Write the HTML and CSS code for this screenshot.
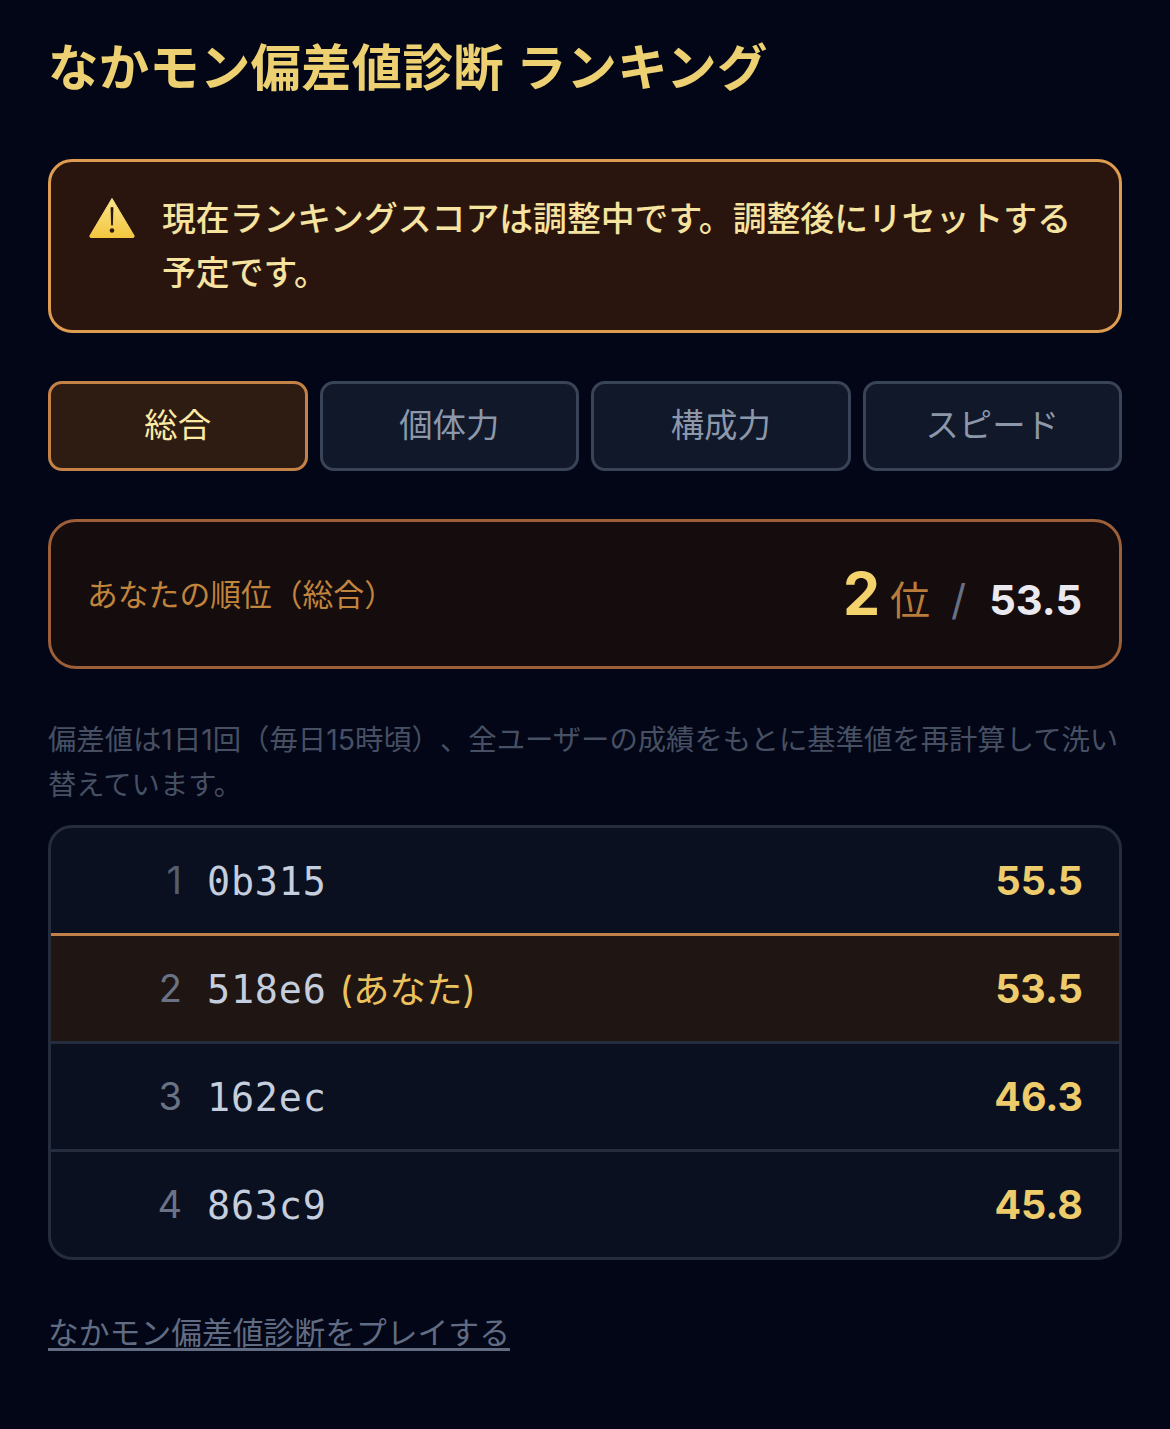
FILE: index.html
```html
<!DOCTYPE html>
<html lang="ja">
<head>
<meta charset="utf-8">
<title>なかモン偏差値診断 ランキング</title>
<link rel="stylesheet" href="styles.css">
</head>
<body>
<main class="page">
  <h1 class="title">なかモン偏差値診断 ランキング</h1>
  <section class="notice">
    <svg class="notice-icon" viewBox="0 0 46 41" aria-hidden="true">
      <defs>
        <linearGradient id="warn" x1="0" y1="0" x2="0" y2="1">
          <stop offset="0" stop-color="#fbe68c"/>
          <stop offset="1" stop-color="#f3c63f"/>
        </linearGradient>
      </defs>
      <path d="M23 1.5 L45 38.5 Q45.6 40.5 44 40.5 L2 40.5 Q.4 40.5 1 38.5 Z" fill="url(#warn)" stroke="url(#warn)" stroke-linejoin="round"/>
      <path d="M21.6 10.5 Q23 9.3 24.4 10.5 L23.9 28 Q23 29 22.1 28 Z" fill="#2a1a10"/>
      <circle cx="23" cy="33.5" r="2.3" fill="#2a1a10"/>
    </svg>
    <p class="notice-text">現在ランキングスコアは調整中です。調整後にリセットする予定です。</p>
  </section>
  <nav class="tabs">
    <a class="tab tab-active">総合</a>
    <a class="tab">個体力</a>
    <a class="tab">構成力</a>
    <a class="tab">スピード</a>
  </nav>
  <section class="mine">
    <span class="mine-label">あなたの順位（総合）</span>
    <span class="mine-value">
      <b class="mine-rank">2</b>
      <span class="mine-unit">位</span>
      <span class="mine-sep">/</span>
      <b class="mine-score">53.5</b>
    </span>
  </section>
  <p class="note">偏差値は1日1回（毎日15時頃）、全ユーザーの成績をもとに基準値を再計算して洗い替えています。</p>
  <ol class="board">
    <li class="row"><span class="pos pos-dim">1</span><span class="name">0b315</span><b class="score">55.5</b></li>
    <li class="row row-me"><span class="pos">2</span><span class="name">518e6<span class="you">(あなた)</span></span><b class="score">53.5</b></li>
    <li class="row"><span class="pos">3</span><span class="name">162ec</span><b class="score">46.3</b></li>
    <li class="row"><span class="pos">4</span><span class="name">863c9</span><b class="score">45.8</b></li>
  </ol>
  <a class="play" href="#">なかモン偏差値診断をプレイする</a>
</main>
</body>
</html>
```
FILE: styles.css
```css
* { box-sizing: border-box; }
html, body { margin: 0; padding: 0; }
body {
  background: #020617;
  font-family: Inter, "Noto Sans CJK JP", sans-serif;
  text-spacing-trim: space-all;
  color: #e2e8f0;
  height: 1429px;
  overflow: hidden;
}
.page { padding: 32px 48px 0; }
.title {
  margin: 0 0 55px;
  font-size: 50.4px;
  letter-spacing: .25px;
  line-height: 72px;
  font-weight: 700;
  color: #edd071;
}
.notice {
  display: flex;
  gap: 27px;
  padding: 30px 38px 30px;
  border: 3px solid #dd9c50;
  border-radius: 24px;
  background: #29150e;
  margin-bottom: 48px;
}
.notice-icon { flex: none; width: 46px; height: 41px; margin-top: 5px; }
.notice-text {
  margin: 0;
  font-size: 33.85px;
  line-height: 54px;
  font-weight: 500;
  color: #f6e3a0;
}
.tabs {
  display: grid;
  grid-template-columns: repeat(4, 1fr);
  gap: 12px;
  margin-bottom: 48px;
}
.tab {
  height: 90px;
  display: flex;
  align-items: center;
  justify-content: center;
  padding-bottom: 7px;
  font-size: 33.4px;
  color: #8c97aa;
  background: #10182a;
  border: 3px solid #3a4458;
  border-radius: 14px;
}
.tab-active {
  color: #fbe9a4;
  background: #2e1b12;
  border-color: #c58247;
}
.mine {
  height: 150px;
  display: flex;
  align-items: center;
  justify-content: space-between;
  padding: 0 37px 0 36px;
  border: 3px solid #9c5f38;
  border-radius: 28px;
  background: #150c0e;
  margin-bottom: 49px;
}
.mine-label { font-size: 30.8px; color: #c0843c; padding-bottom: 4px; }
.mine-value { display: flex; align-items: baseline; padding-top: 3px; }
.mine-rank { font-size: 59px; line-height: 1; font-weight: 700; color: #f5d36c; }
.mine-unit { font-size: 40px; color: #b97c3b; margin-left: 10px; }
.mine-sep { font-size: 42px; color: #667085; margin-left: 21px; }
.mine-score { font-size: 41.6px; font-weight: 700; color: #e9e9ef; margin-left: 23px; }
.note {
  margin: 0 0 17px;
  font-size: 28.35px;
  line-height: 45px;
  color: #475063;
}
.board {
  list-style: none;
  margin: 0 0 50px;
  padding: 0;
  border: 3px solid #242c3e;
  border-radius: 24px;
  overflow: hidden;
  background: #0a101f;
}
.row {
  height: 108px;
  display: flex;
  align-items: center;
  padding: 0 36px 0 0;
  border-bottom: 3px solid #242c3e;
}
.row:last-child { border-bottom: 0; height: 105px; }
.row:first-child { border-bottom-color: #c0814a; }
.row-me { background: #1f1512; }
.pos { width: 131px; text-align: right; font-size: 38px; color: #6a7385; flex: none; padding-bottom: 2px; }
.pos-dim { color: #545e70; }
.name {
  flex: 1;
  margin-left: 25px;
  padding-top: 4px;
  font-family: "DejaVu Sans Mono", monospace;
  font-size: 38.4px;
  letter-spacing: .8px;
  line-height: 1;
  color: #c4cede;
}
.you {
  font-family: Inter, "Noto Sans CJK JP", sans-serif;
  font-size: 36.5px;
  letter-spacing: 0;
  margin-left: 13px;
  color: #ecc25f;
}
.score { font-size: 39.4px; font-weight: 700; color: #eecb6b; }
.play {
  display: inline-block;
  font-size: 30.8px;
  line-height: 46px;
  color: #616c82;
  text-decoration: underline;
  text-underline-offset: 4px;
}
```
